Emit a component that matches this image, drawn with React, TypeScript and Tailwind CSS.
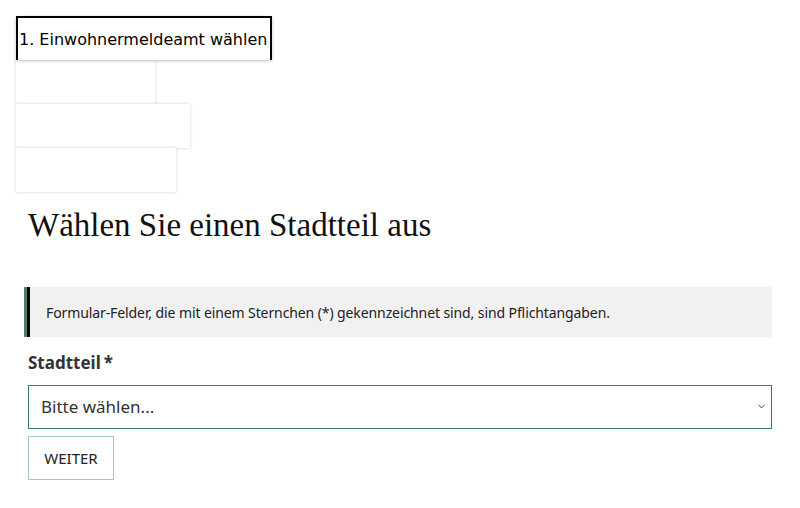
import { ChevronDown } from 'lucide-react';

const emptySteps = ['w-[139px]', 'w-[174px]', 'w-[160px]'];

export default function App() {
  return (
    <div className="min-h-[508px] bg-white pt-4 text-[#333]">
      {/* step list */}
      <div className="ml-4 flex flex-col items-start">
        <div className="relative z-10 flex h-[44px] w-[256px] items-center border-x-2 border-t-2 border-black bg-white pl-[1px] pt-[2px] font-['DejaVu_Sans',sans-serif] text-[16px] text-black shadow-[0_1px_3px_rgba(0,0,0,0.25)]">
          1. Einwohnermeldeamt wählen
        </div>
        {emptySteps.map((w, i) => (
          <div key={i} className={`h-[44px] ${w} bg-white shadow-[0_0_3px_rgba(0,0,0,0.18)]`} />
        ))}
      </div>

      <h1 className="ml-7 mt-[12px] font-['Liberation_Serif',serif] text-[33px] leading-[42px] text-[#111]">
        Wählen Sie einen Stadtteil aus
      </h1>

      <div className="ml-6 mr-7 mt-[41px] flex h-[50px] items-center border-l-[3px] border-[#4e7f6c] bg-[#f1f1f1]">
        <div className="flex h-full items-center border-l-[3px] border-black pl-4 font-['Noto_Sans',sans-serif] text-[14px] tracking-[-0.1px] text-[#222]">
          Formular-Felder, die mit einem Sternchen (*) gekennzeichnet sind, sind Pflichtangaben.
        </div>
      </div>

      <label className="ml-7 mt-[13px] block font-['Noto_Sans',sans-serif] text-[17px] font-bold leading-[26px] text-[#333]">
        Stadtteil<span className="ml-[3px]">*</span>
      </label>

      <div className="relative ml-7 mr-7 mt-[9px]">
        <select className="h-[44px] w-full appearance-none border border-[#3f7a66] bg-white pl-3 font-['Noto_Sans',sans-serif] text-[17px] text-[#333] outline-none">
          <option>Bitte wählen...</option>
        </select>
        <ChevronDown className="pointer-events-none absolute right-[5px] top-[16px] h-[11px] w-[11px] text-[#333]" strokeWidth={2} />
      </div>

      <button className="ml-7 mt-[7px] h-[44px] w-[86px] border border-[#a9c6bc] bg-white font-['Noto_Sans',sans-serif] text-[15px] text-[#222]">
        WEITER
      </button>
    </div>
  );
}
